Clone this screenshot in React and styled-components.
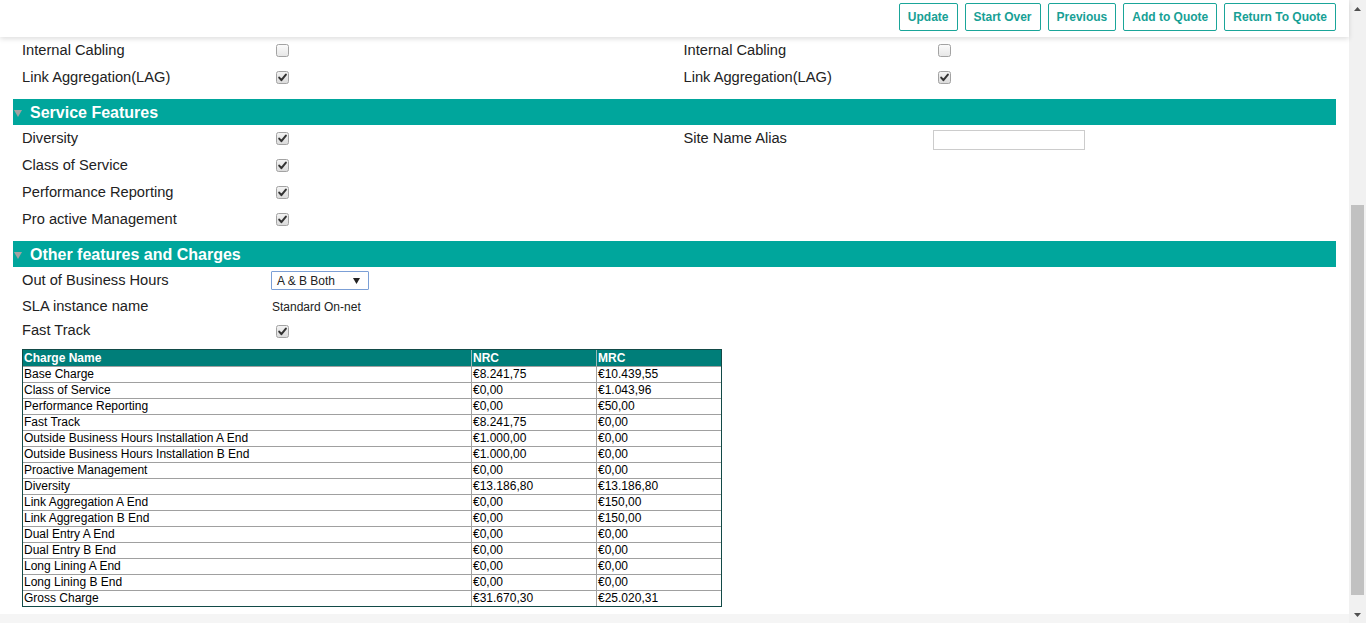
import React from "react";
import styled, { createGlobalStyle } from "styled-components";

const GlobalStyle = createGlobalStyle`
  html, body { margin: 0; padding: 0; overflow: hidden; }
  body { font-family: "Liberation Sans", Arial, sans-serif; color: #222; background: #fff; }
  * { box-sizing: border-box; }
`;

const Frame = styled.div`
  display: flex;
  width: 1366px;
  height: 623px;
`;

const Main = styled.div`
  flex: 1;
  display: flex;
  flex-direction: column;
  min-width: 0;
  background: #fff;
`;

const TopBar = styled.header`
  position: relative;
  z-index: 1;
  height: 37px;
  flex: none;
  display: flex;
  justify-content: flex-end;
  align-items: flex-start;
  gap: 7px;
  padding: 3px 13px 0 0;
  background: #fff;
  box-shadow: 0 2px 5px rgba(0, 0, 0, 0.13);
`;

const ActionButton = styled.button`
  height: 28px;
  padding: 0 8px;
  border: 1px solid #1aa599;
  border-radius: 2px;
  background: #fff;
  color: #17a095;
  font-family: "Liberation Sans", Arial, sans-serif;
  font-weight: bold;
  font-size: 12px;
  cursor: pointer;
`;

const Content = styled.main`
  flex: 1;
  padding: 0 13px;
  overflow: hidden;
`;

const Columns = styled.div`
  display: grid;
  grid-template-columns: 1fr 1fr;
`;

const Column = styled.div`
  display: flex;
  flex-direction: column;
`;

const Row = styled.div`
  display: flex;
  align-items: center;
  height: ${(p) => p.$h || 27}px;
  padding-left: 9px;
`;

const Label = styled.span`
  width: 249px;
  flex: none;
  font-size: 11pt;
  color: #222;
  padding-bottom: 2px;
`;

const BoxWrap = styled.span`
  display: inline-flex;
  width: 13px;
  height: 13px;
  margin-left: 5px;
  svg { display: block; }
`;

const SectionHeader = styled.div`
  display: flex;
  align-items: center;
  height: 26px;
  margin-top: 8px;
  padding: 2px 0 0 1px;
  background: #00a69c;
  color: #fff;
  font-weight: bold;
  font-size: 16px;
  gap: 8px;
`;

const TextInput = styled.input`
  width: 152px;
  height: 20px;
  margin-top: 3px;
  border: 1px solid #ccc;
  padding: 0 4px;
  font-family: inherit;
  font-size: 12px;
`;

const SelectBox = styled.div`
  display: flex;
  align-items: center;
  justify-content: space-between;
  width: 98px;
  height: 19px;
  border: 1px solid #7b9fd6;
  border-radius: 1px;
  padding: 0 8px 0 5px;
  font-size: 12px;
  color: #222;
`;

const PlainValue = styled.span`
  font-size: 12px;
  color: #222;
  padding-left: 1px;
`;

const ChargeTable = styled.table`
  margin: 7px 0 0 9px;
  width: 700px;
  table-layout: fixed;
  border-collapse: separate;
  border-spacing: 0;
  border: 1px solid #124a47;
  font-size: 12px;
`;

const HeadCell = styled.th`
  width: ${(p) => p.$w}px;
  height: 16px;
  line-height: 16px;
  padding: 0 0 0 1px;
  text-align: left;
  font-weight: bold;
  color: #fff;
  background: #007e79;
  border-right: 1px solid #9fb8b6;
  white-space: nowrap;
  &:last-child { border-right: none; }
`;

const Cell = styled.td`
  height: 16px;
  line-height: 15px;
  padding: 0 0 0 1px;
  color: #000;
  border-top: 1px solid #a0a0a0;
  border-right: 1px solid #a0a0a0;
  white-space: nowrap;
  overflow: hidden;
  &:last-child { border-right: none; }
`;

const BottomStrip = styled.div`
  height: 9px;
  flex: none;
  background: #f5f5f5;
`;

const ScrollBar = styled.aside`
  width: 17px;
  flex: none;
  display: flex;
  flex-direction: column;
  background: #f1f1f1;
`;

const ScrollArrow = styled.div`
  height: 17px;
  flex: none;
  display: flex;
  align-items: center;
  justify-content: center;
`;

const ScrollTrack = styled.div`
  flex: 1;
  padding: 188px 2px 0 2px;
`;

const ScrollThumb = styled.div`
  height: 390px;
  background: #c1c1c1;
`;

function Checkbox({ checked }) {
  return (
    <BoxWrap>
      <svg width="13" height="13" viewBox="0 0 13 13">
        <defs>
          <linearGradient id={checked ? "cbg1" : "cbg0"} x1="0" y1="0" x2="0" y2="1">
            <stop offset="0" stopColor={checked ? "#f4f4f4" : "#fcfcfc"} />
            <stop offset="1" stopColor={checked ? "#dadada" : "#e6e6e6"} />
          </linearGradient>
        </defs>
        <rect x="0.5" y="0.5" width="12" height="12" rx="2" fill={`url(#${checked ? "cbg1" : "cbg0"})`} stroke="#a3a3a3" />
        {checked && (
          <path d="M3.2 6.6 L5.4 9.2 L9.9 3.6" fill="none" stroke="#333" strokeWidth="2" strokeLinecap="round" strokeLinejoin="round" />
        )}
      </svg>
    </BoxWrap>
  );
}

function Section({ title }) {
  return (
    <SectionHeader>
      <svg width="8" height="8" viewBox="0 0 8 8">
        <polygon points="0,1 8,1 4,8" fill="#a2a2a2" />
      </svg>
      {title}
    </SectionHeader>
  );
}

const charges = [
  ["Base Charge", "€8.241,75", "€10.439,55"],
  ["Class of Service", "€0,00", "€1.043,96"],
  ["Performance Reporting", "€0,00", "€50,00"],
  ["Fast Track", "€8.241,75", "€0,00"],
  ["Outside Business Hours Installation A End", "€1.000,00", "€0,00"],
  ["Outside Business Hours Installation B End", "€1.000,00", "€0,00"],
  ["Proactive Management", "€0,00", "€0,00"],
  ["Diversity", "€13.186,80", "€13.186,80"],
  ["Link Aggregation A End", "€0,00", "€150,00"],
  ["Link Aggregation B End", "€0,00", "€150,00"],
  ["Dual Entry A End", "€0,00", "€0,00"],
  ["Dual Entry B End", "€0,00", "€0,00"],
  ["Long Lining A End", "€0,00", "€0,00"],
  ["Long Lining B End", "€0,00", "€0,00"],
  ["Gross Charge", "€31.670,30", "€25.020,31"],
];

export default function App() {
  return (
    <>
      <GlobalStyle />
      <Frame>
        <Main>
          <TopBar>
            <ActionButton>Update</ActionButton>
            <ActionButton>Start Over</ActionButton>
            <ActionButton>Previous</ActionButton>
            <ActionButton>Add to Quote</ActionButton>
            <ActionButton>Return To Quote</ActionButton>
          </TopBar>
          <Content>
            <Columns>
              <Column>
                <Row><Label>Internal Cabling</Label><Checkbox /></Row>
                <Row><Label>Link Aggregation(LAG)</Label><Checkbox checked /></Row>
              </Column>
              <Column>
                <Row><Label>Internal Cabling</Label><Checkbox /></Row>
                <Row><Label>Link Aggregation(LAG)</Label><Checkbox checked /></Row>
              </Column>
            </Columns>

            <Section title="Service Features" />
            <Columns>
              <Column>
                <Row><Label>Diversity</Label><Checkbox checked /></Row>
                <Row><Label>Class of Service</Label><Checkbox checked /></Row>
                <Row><Label>Performance Reporting</Label><Checkbox checked /></Row>
                <Row><Label>Pro active Management</Label><Checkbox checked /></Row>
              </Column>
              <Column>
                <Row><Label>Site Name Alias</Label><TextInput type="text" /></Row>
              </Column>
            </Columns>

            <Section title="Other features and Charges" />
            <Column>
              <Row $h={27}>
                <Label>Out of Business Hours</Label>
                <SelectBox>
                  <span>A &amp; B Both</span>
                  <svg width="7" height="6" viewBox="0 0 7 6">
                    <polygon points="0,0 7,0 3.5,6" fill="#222" />
                  </svg>
                </SelectBox>
              </Row>
              <Row $h={26}>
                <Label>SLA instance name</Label>
                <PlainValue>Standard On-net</PlainValue>
              </Row>
              <Row $h={22}>
                <Label>Fast Track</Label>
                <Checkbox checked />
              </Row>
            </Column>

            <ChargeTable>
              <thead>
                <tr>
                  <HeadCell $w={449}>Charge Name</HeadCell>
                  <HeadCell $w={125}>NRC</HeadCell>
                  <HeadCell $w={124}>MRC</HeadCell>
                </tr>
              </thead>
              <tbody>
                {charges.map(([name, nrc, mrc]) => (
                  <tr key={name}>
                    <Cell>{name}</Cell>
                    <Cell>{nrc}</Cell>
                    <Cell>{mrc}</Cell>
                  </tr>
                ))}
              </tbody>
            </ChargeTable>
          </Content>
          <BottomStrip />
        </Main>
        <ScrollBar>
          <ScrollArrow>
            <svg width="7" height="4" viewBox="0 0 7 4">
              <polygon points="0,4 7,4 3.5,0" fill="#505050" />
            </svg>
          </ScrollArrow>
          <ScrollTrack>
            <ScrollThumb />
          </ScrollTrack>
          <ScrollArrow>
            <svg width="7" height="4" viewBox="0 0 7 4">
              <polygon points="0,0 7,0 3.5,4" fill="#505050" />
            </svg>
          </ScrollArrow>
        </ScrollBar>
      </Frame>
    </>
  );
}
